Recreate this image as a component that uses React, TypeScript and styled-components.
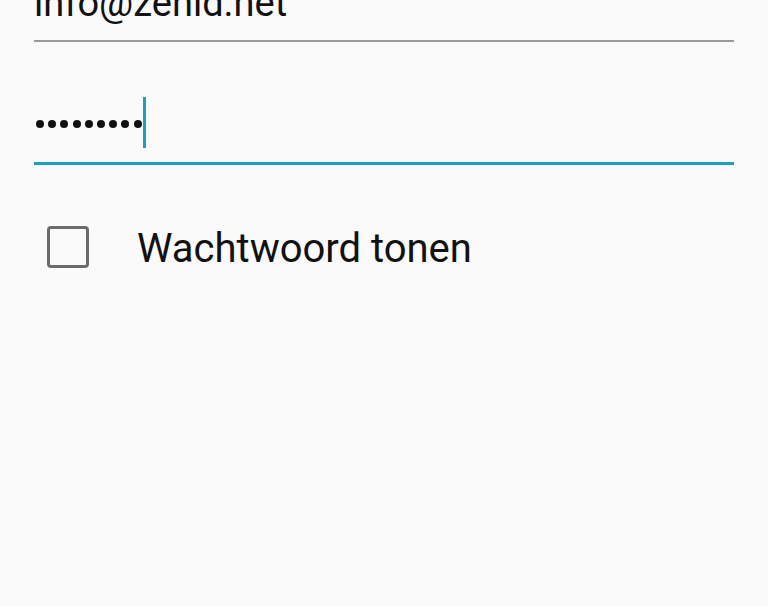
import styled, { createGlobalStyle } from 'styled-components';

const GlobalStyle = createGlobalStyle`
  html, body {
    margin: 0;
    padding: 0;
    background: #fafafa;
  }
  body {
    font-family: Roboto, 'Noto Sans', sans-serif;
    color: #111;
    overflow: hidden;
  }
`;

export default function App() {
  const dots = Array.from({ length: 9 });
  return (
    <>
      <GlobalStyle />
      <Screen>
        <EmailField>
          <EmailText>info@zenid.net</EmailText>
        </EmailField>
        <PasswordField>
          <Dots>
            {dots.map((_, i) => (
              <Dot key={i} />
            ))}
          </Dots>
          <Caret />
        </PasswordField>
        <CheckRow>
          <CheckBox />
          <CheckLabel>Wachtwoord tonen</CheckLabel>
        </CheckRow>
      </Screen>
    </>
  );
}

const Screen = styled.div`
  width: 768px;
  height: 606px;
  padding: 0 34px;
  box-sizing: border-box;
  display: flex;
  flex-direction: column;
`;

const EmailField = styled.div`
  height: 42px;
  box-sizing: border-box;
  border-bottom: 2px solid #9a9a9a;
  display: flex;
  align-items: flex-end;
  padding-bottom: 17px;
`;

const EmailText = styled.span`
  font-size: 38px;
  line-height: 40px;
  white-space: nowrap;
`;

const PasswordField = styled.div`
  height: 123px;
  box-sizing: border-box;
  border-bottom: 3px solid #1b9fc0;
  display: flex;
  align-items: flex-start;
  padding-top: 55px;
  padding-left: 2px;
`;

const Dots = styled.div`
  display: flex;
  gap: 4.2px;
  margin-top: 23px;
`;

const Dot = styled.span`
  width: 8px;
  height: 8px;
  border-radius: 50%;
  background: #111;
`;

const Caret = styled.span`
  width: 3px;
  height: 51px;
  background: #1b9fc0;
  margin-left: 1px;
`;

const CheckRow = styled.div`
  display: flex;
  align-items: flex-start;
  margin-top: 60px;
  padding-left: 13px;
`;

const CheckBox = styled.span`
  width: 42px;
  height: 42px;
  margin-top: 1px;
  box-sizing: border-box;
  border: 3px solid #6b6b6b;
  border-radius: 4px;
`;

const CheckLabel = styled.span`
  margin-left: 48px;
  font-size: 40px;
  line-height: 48px;
`;
